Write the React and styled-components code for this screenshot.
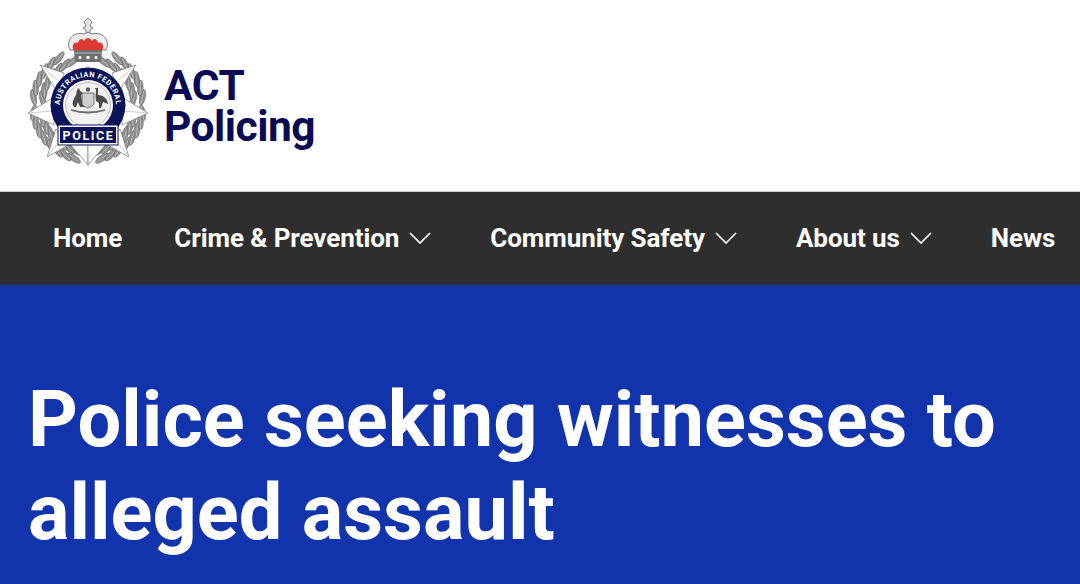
import React from 'react'
import styled, { createGlobalStyle } from 'styled-components'

const GlobalStyle = createGlobalStyle`
  html, body {
    margin: 0;
    padding: 0;
    background: #fff;
    overflow: hidden;
  }
  body {
    font-family: Roboto, "Liberation Sans", sans-serif;
  }
`

const Page = styled.div`
  width: 1080px;
  height: 584px;
  overflow: hidden;
  display: flex;
  flex-direction: column;
`

const Header = styled.header`
  height: 191px;
  flex: none;
  display: flex;
  align-items: center;
  gap: 15px;
  padding-left: 27px;
  background: #fff;
  border-bottom: 1px solid #c9c9c9;
  box-sizing: content-box;
`

const BadgeMark = styled.svg`
  flex: none;
  margin-bottom: 7px;
`

const Wordmark = styled.div`
  font-size: 42.5px;
  font-weight: 700;
  line-height: 41px;
  letter-spacing: -0.5px;
  color: #0b0b55;
  padding-top: 20px;
`

const Nav = styled.nav`
  height: 93px;
  box-sizing: border-box;
  padding: 0 0 2px 53px;
  flex: none;
  display: flex;
  align-items: center;
  gap: 52px;
  background: #2e2e2e;
  white-space: nowrap;
`

const NavItem = styled.a`
  display: flex;
  align-items: center;
  gap: 10px;
  margin-right: ${(p) => (p.$menu ? '7px' : '0')};
  color: #fff;
  font-size: 26px;
  font-weight: 700;
  letter-spacing: -0.08px;
`

const Hero = styled.section`
  flex: 1;
  background: #1133ab;
  padding: 88px 0 0 28px;
`

const Title = styled.h1`
  margin: 0;
  color: #fff;
  font-size: 77.6px;
  font-weight: 700;
  line-height: 93px;
`

const Chevron = () => (
  <svg width="22" height="12" viewBox="0 0 22 12" fill="none" stroke="#fff" strokeWidth="1.7">
    <path d="M1 1 L11 11 L21 1" />
  </svg>
)

// leaves of the wreath, placed on arcs round the badge centre (61, 88)
const leaves = []
const addArc = (radius, from, to, count, tilt) => {
  for (let i = 0; i < count; i++) {
    const deg = from + ((to - from) * i) / (count - 1)
    const rad = (deg * Math.PI) / 180
    leaves.push({
      x: 61 + radius * Math.cos(rad),
      y: 88 + radius * Math.sin(rad),
      r: deg + tilt,
    })
  }
}
addArc(55, 105, 172, 8, 20)
addArc(47, 105, 172, 8, 20)
addArc(55, 188, 238, 6, -20)
addArc(46, 188, 250, 7, -20)

const Wreath = ({ flip }) => (
  <g transform={flip ? 'translate(122 0) scale(-1 1)' : undefined}>
    {leaves.map((l, i) => (
      <g key={i} transform={`rotate(${l.r} ${l.x} ${l.y})`}>
        <ellipse cx={l.x} cy={l.y} rx="2.8" ry="8" fill="#8f8f8f" stroke="#5f5f5f" strokeWidth="0.5" />
        <path d={`M${l.x} ${l.y - 7} V${l.y + 7}`} stroke="#d4d4d4" strokeWidth="0.6" />
      </g>
    ))}
  </g>
)

const StarSide = ({ flip }) => (
  <g transform={flip ? 'translate(122 0) scale(-1 1)' : undefined} fill="#fff" stroke="#7a7a7a" strokeWidth="0.7">
    <path d="M13 48 L37 56 L31 76 Z" />
    <path d="M1 96 L27 80 L27 108 Z" />
    <path d="M20 140 L29 112 L45 126 Z" />
    <path d="M61 148 L42 126 L61 120 Z" />
    <path d="M13 48 L34 66" stroke="#b5b5b5" fill="none" />
    <path d="M1 96 L27 94" stroke="#b5b5b5" fill="none" />
    <path d="M20 140 L37 119" stroke="#b5b5b5" fill="none" />
  </g>
)

const Kangaroo = () => (
  <path d="M47 90 C44 86 47 82 49 78 L50 73 L52 71 L53 74 L56 76 L54 78 L55 84 L58 90 L53 90 L51 85 L49 90 Z" fill="#4b4b4b" />
)

const Emu = () => (
  <path d="M68 71 L71 71 L71 78 C76 78 81 82 81 87 L76 85 L74 91 L72 91 L72 86 L69 84 C68 80 69 76 69 73 Z" fill="#4b4b4b" />
)

const Badge = () => (
  <BadgeMark width="122" height="150" viewBox="0 0 122 150">
    <Wreath />
    <Wreath flip />
    <StarSide />
    <StarSide flip />
    {/* crown */}
    <path d="M61 1 L65 5 L63 9 L66 11 L63 13 L63 18 L59 18 L59 13 L56 11 L59 9 L57 5 Z" fill="#e6e6e6" stroke="#666" strokeWidth="0.8" />
    <path d="M43 33 C38 23 47 14 57 17 L61 15 L65 17 C75 14 84 23 79 33 Z" fill="#ececec" stroke="#777" strokeWidth="1" />
    <path d="M47 34 C44 29 47 24 51 26 C52 21 56 21 57 24 C59 20 63 20 65 24 C66 21 70 21 71 26 C75 24 78 29 75 34 Z" fill="#d93a32" />
    <path d="M47 33 H75 L74 45 H48 Z" fill="#6e6e6e" />
    <path d="M48 36 H74" stroke="#bbb" strokeWidth="1" />
    <g fill="#fff">
      <circle cx="53" cy="40.5" r="1.5" />
      <circle cx="61" cy="40.5" r="1.8" />
      <circle cx="69" cy="40.5" r="1.5" />
    </g>
    {/* ring */}
    <circle cx="61" cy="88" r="37.5" fill="#0b1458" />
    <circle cx="61" cy="88" r="25" fill="#fff" />
    <circle cx="61" cy="88" r="22.5" fill="#f2f2f2" stroke="#8b8b8b" strokeWidth="0.6" />
    <defs>
      <path id="ringText" d="M34.5 97 A28 28 0 1 1 87.5 97" />
    </defs>
    <text fontFamily="Roboto, sans-serif" fontWeight="700" fontSize="7.4" fill="#fff" letterSpacing="0.55">
      <textPath href="#ringText" startOffset="50%" textAnchor="middle">AUSTRALIAN FEDERAL</textPath>
    </text>
    {/* arms: kangaroo, shield, emu */}
    <Kangaroo />
    <Emu />
    <path d="M55 76 H67 V86 C67 89 63 90 61 91 C59 90 55 89 55 86 Z" fill="#cfcfcf" stroke="#555" strokeWidth="0.8" />
    <circle cx="61" cy="72.5" r="2.2" fill="#5a5a5a" />
    <path d="M44 93 Q61 98 78 93" stroke="#6a6a6a" strokeWidth="1.8" fill="none" />
    {/* POLICE banner */}
    <rect x="31" y="108" width="60" height="20" fill="#fff" stroke="#0b1458" strokeWidth="1" />
    <rect x="33" y="110" width="56" height="16" fill="#0b1458" />
    <text x="61.5" y="122.5" textAnchor="middle" fontFamily="Roboto, sans-serif" fontWeight="700" fontSize="12.5" fill="#fff" letterSpacing="1.6">POLICE</text>
  </BadgeMark>
)

export default function App() {
  return (
    <Page>
      <GlobalStyle />
      <Header>
        <Badge />
        <Wordmark>ACT<br />Policing</Wordmark>
      </Header>
      <Nav>
        <NavItem>Home</NavItem>
        <NavItem $menu>Crime &amp; Prevention <Chevron /></NavItem>
        <NavItem $menu>Community Safety <Chevron /></NavItem>
        <NavItem $menu>About us <Chevron /></NavItem>
        <NavItem>News</NavItem>
      </Nav>
      <Hero>
        <Title>Police seeking witnesses to<br />alleged assault</Title>
      </Hero>
    </Page>
  )
}
